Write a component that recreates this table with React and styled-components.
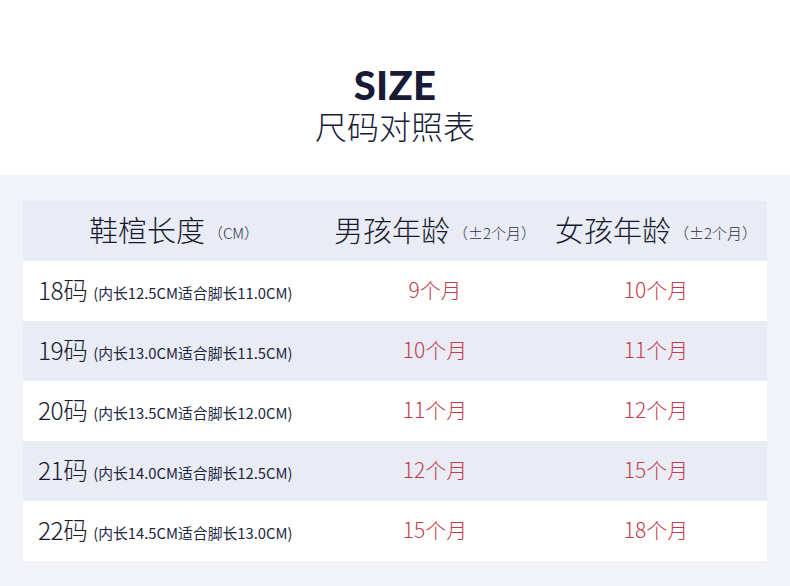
import React from 'react';
import styled, { createGlobalStyle } from 'styled-components';

const GlobalStyle = createGlobalStyle`
  body {
    margin: 0;
    background: #f2f3f8;
    font-family: 'Noto Sans CJK SC', 'Noto Sans', sans-serif;
  }
`;

const Page = styled.div`
  width: 790px;
  height: 586px;
  overflow: hidden;
  background: #f2f3f8;
`;

const Top = styled.div`
  height: 175px;
  background: #fff;
  display: flex;
  flex-direction: column;
  align-items: center;
  padding-top: 62px;
  box-sizing: border-box;
  color: #171b36;
`;

const Title = styled.div`
  font-family: 'Lato', 'Noto Sans', sans-serif;
  font-weight: 900;
  font-size: 40px;
  line-height: 46px;
  letter-spacing: 0.3px;
`;

const SubTitle = styled.div`
  font-size: 32px;
  font-weight: 300;
  line-height: 34px;
`;

const Table = styled.div`
  margin: 26px 23px 0;
  display: grid;
  grid-template-columns: 302px 220px 222px;
`;

const Row = styled.div`
  display: contents;
  & > div {
    background: ${(p) => (p.$alt ? '#e9ecf4' : '#fff')};
    height: 60px;
    display: flex;
    align-items: center;
  }
`;

const HeadCell = styled.div`
  justify-content: center;
  color: #161a30;
  font-size: 29px;
  font-weight: 300;
  padding-bottom: 5px;
  box-sizing: border-box;
`;

const HeadNote = styled.span`
  font-size: 15px;
  margin-left: 3px;
  margin-top: 8px;
  color: #2a2f48;
`;

const SizeCell = styled.div`
  padding-left: 15px;
  padding-bottom: 3px;
  box-sizing: border-box;
  color: #161a30;
`;

const SizeNum = styled.span`
  font-size: 24.5px;
  font-weight: 300;
  letter-spacing: -0.5px;
`;

const SizeNote = styled.span`
  font-size: 14.8px;
  margin-left: 6px;
  margin-top: 5px;
  color: #22273f;
`;

const AgeCell = styled.div`
  justify-content: center;
  color: #c4394c;
  font-size: 21px;
  font-weight: 300;
  padding-bottom: 4px;
  box-sizing: border-box;
`;

const rows = [
  ['18', '12.5', '11.0', '9', '10'],
  ['19', '13.0', '11.5', '10', '11'],
  ['20', '13.5', '12.0', '11', '12'],
  ['21', '14.0', '12.5', '12', '15'],
  ['22', '14.5', '13.0', '15', '18'],
];

export default function App() {
  return (
    <Page>
      <GlobalStyle />
      <Top>
        <Title>SIZE</Title>
        <SubTitle>尺码对照表</SubTitle>
      </Top>
      <Table>
        <Row $alt>
          <HeadCell>
            鞋楦长度<HeadNote>（CM）</HeadNote>
          </HeadCell>
          <HeadCell>
            男孩年龄<HeadNote>（±2个月）</HeadNote>
          </HeadCell>
          <HeadCell>
            女孩年龄<HeadNote>（±2个月）</HeadNote>
          </HeadCell>
        </Row>
        {rows.map((r, i) => (
          <Row key={r[0]} $alt={i % 2 === 1}>
            <SizeCell>
              <SizeNum>{r[0]}码</SizeNum>
              <SizeNote>(内长{r[1]}CM适合脚长{r[2]}CM)</SizeNote>
            </SizeCell>
            <AgeCell>{r[3]}个月</AgeCell>
            <AgeCell>{r[4]}个月</AgeCell>
          </Row>
        ))}
      </Table>
    </Page>
  );
}
